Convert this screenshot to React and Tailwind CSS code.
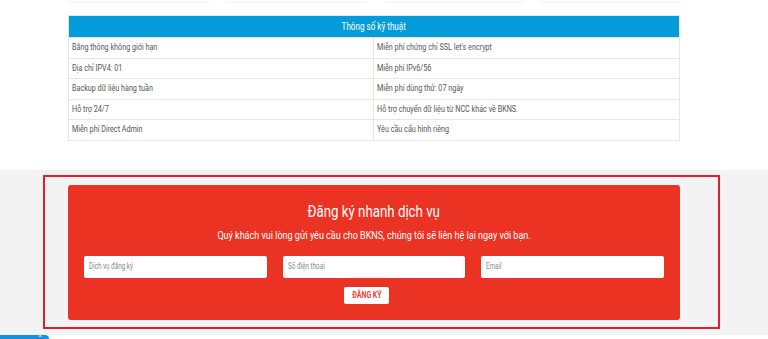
import React from "react";

const rows = [
  ["Băng thông không giới hạn", "Miễn phí chứng chỉ SSL let's encrypt"],
  ["Địa chỉ IPV4: 01", "Miễn phí IPv6/56"],
  ["Backup dữ liệu hàng tuần", "Miễn phí dùng thử: 07 ngày"],
  ["Hỗ trợ 24/7", "Hỗ trợ chuyển dữ liệu từ NCC khác về BKNS."],
  ["Miễn phí Direct Admin", "Yêu cầu cấu hình riêng"],
];

export default function App() {
  return (
    <div className="w-[768px] h-[339px] overflow-hidden bg-white text-[#555]" style={{ fontFamily: 'Roboto, "Liberation Sans", sans-serif' }}>
      <div className="h-[170px] bg-white">
        <div className="ml-[69px] w-[613px] grid grid-cols-4 gap-4 h-[1px]">
          <div className="bg-white shadow-[0_1px_3px_rgba(0,0,0,0.12)]" />
          <div className="bg-white shadow-[0_1px_3px_rgba(0,0,0,0.12)]" />
          <div className="bg-white shadow-[0_1px_3px_rgba(0,0,0,0.12)]" />
          <div className="bg-white shadow-[0_1px_3px_rgba(0,0,0,0.12)]" />
        </div>
        <div className="ml-[68px] mt-[14px] w-[612px] border border-[#e6e6e6]">
          <div className="h-[21px] bg-[#039bd9] flex items-center justify-center text-white text-[10px]">
            <span className="inline-block whitespace-nowrap scale-x-[0.81]">Thông số kỹ thuật</span>
          </div>
          {rows.map((r, i) => (
            <div key={i} className="grid grid-cols-2 h-[20.5px] border-t border-[#e6e6e6]">
              <div className="flex items-center pl-[3px] text-[9px] border-r border-[#e6e6e6]">
                <span className="inline-block whitespace-nowrap origin-left scale-x-[0.8]">{r[0]}</span>
              </div>
              <div className="flex items-center pl-[3px] text-[9px]">
                <span className="inline-block whitespace-nowrap origin-left scale-x-[0.8]">{r[1]}</span>
              </div>
            </div>
          ))}
        </div>
      </div>
      <div className="h-[165px] bg-[#f3f3f3] pt-[5px]">
        <div className="ml-[43px] w-[677px] h-[154px] border-2 border-[#e31e2d] pl-[23px] pt-[8px]">
          <div className="w-[612px] h-[135px] bg-[#ea3323] rounded-[3px] flex flex-col items-center pt-[17px]">
            <div className="text-white text-[16px] leading-[20px]">
              <span className="inline-block whitespace-nowrap scale-x-[0.83]">Đăng ký nhanh dịch vụ</span>
            </div>
            <div className="text-white text-[11px] leading-[14px] mt-[7px]">
              <span className="inline-block whitespace-nowrap scale-x-[0.82]">Quý khách vui lòng gửi yêu cầu cho BKNS, chúng tôi sẽ liên hệ lại ngay với bạn.</span>
            </div>
            <div className="w-full px-4 mt-[13px] grid grid-cols-3 gap-4">
              {["Dịch vụ đăng ký", "Số điện thoại", "Email"].map((p) => (
                <div key={p} className="h-[22px] bg-white rounded-[2px] flex items-center pl-[5px] text-[9px] text-[#888]">
                  <span className="inline-block whitespace-nowrap origin-left scale-x-[0.7]">{p}</span>
                </div>
              ))}
            </div>
            <div className="w-full pl-[276px] mt-[9px]">
              <div className="w-[45px] h-[17px] bg-white rounded-[2px] flex items-center justify-center text-[8.5px] font-bold text-[#e8413a]">
                <span className="inline-block whitespace-nowrap scale-x-[0.82]">ĐĂNG KÝ</span>
              </div>
            </div>
          </div>
        </div>
      </div>
      <div className="h-[4px] bg-white">
        <div className="w-[49px] h-[4px] bg-[#1a8fdc] rounded-tr-[6px] relative">
          <span className="absolute left-[38px] -top-[3px] text-[8px] text-[#cde] leading-none">×</span>
        </div>
      </div>
    </div>
  );
}
